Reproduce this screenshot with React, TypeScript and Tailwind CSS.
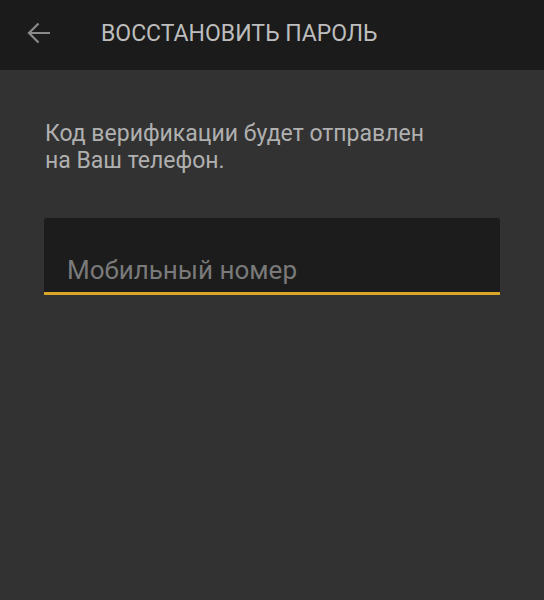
import React from "react";

export default function App() {
  return (
    <div className="w-[544px] h-[600px] bg-[#323232] flex flex-col" style={{ fontFamily: "Roboto, 'Noto Sans', sans-serif" }}>
      <div className="h-[70px] bg-[#1b1b1b] flex items-center shrink-0">
        <div className="w-[101px] flex items-center pl-[27px]">
          <svg width="24" height="22" viewBox="0 0 24 22" className="-mt-[4px]">
            <path d="M23 11H2.5M11.5 1.5L2 11l9.5 9.5" fill="none" stroke="#8a8a8a" strokeWidth="2.2" />
          </svg>
        </div>
        <div className="text-[23px] leading-[27px] text-[#bdbdbd] -mt-[3px]">ВОССТАНОВИТЬ ПАРОЛЬ</div>
      </div>
      <div className="px-[44px] pt-[50px]">
        <p className="text-[23px] leading-[27px] text-[#b0b0b0] pl-[1px]">
          Код верификации будет отправлен
          <br />
          на Ваш телефон.
        </p>
        <div className="mt-[44px] w-[456px] h-[77px] bg-[#1c1c1c] rounded-t-[3px] border-b-[3px] border-[#d9a62a] flex items-end pl-[23px] pb-[7px]">
          <span className="text-[26px] leading-[29px] text-[#7a7a7a]">Мобильный номер</span>
        </div>
      </div>
    </div>
  );
}
